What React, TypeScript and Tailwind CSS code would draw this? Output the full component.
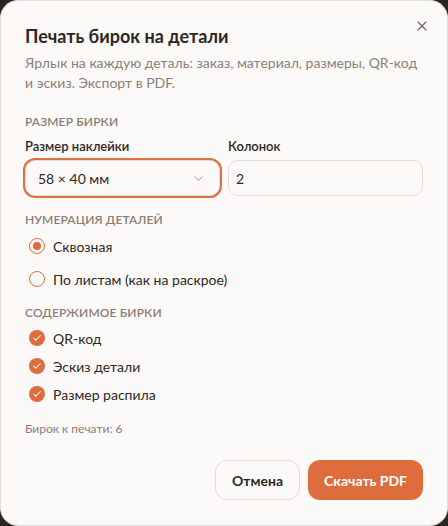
import React from "react";
import { ChevronDown, X, Check } from "lucide-react";

export default function App() {
  const font = { fontFamily: 'Lato, "Noto Sans", sans-serif' };
  return (
    <div className="h-[526px] w-[448px] bg-[#2a2522]" style={font}>
      <div className="relative flex h-full flex-col rounded-[18px] border border-[#e8dfd8] bg-[#fcfaf8] px-6 pt-[21px] text-[#2d2723]">
        <button className="absolute right-[17px] top-[17px] text-[#6d6560]">
          <X size={16} strokeWidth={1.6} />
        </button>
        <h1 className="text-[18px] font-bold leading-7">Печать бирок на детали</h1>
        <p className="mt-[3px] text-[14px] leading-5 text-[#8b8079]">
          Ярлык на каждую деталь: заказ, материал, размеры, QR-код и эскиз. Экспорт в PDF.
        </p>

        <div className="mt-[21px] text-[12px] font-semibold uppercase leading-4 tracking-[0.01em] text-[#8b7e75]">
          Размер бирки
        </div>
        <div className="mt-[6px] grid grid-cols-2 gap-2">
          <div className="flex flex-col">
            <label className="text-[13px] font-semibold leading-5">Размер наклейки</label>
            <div className="mt-[4px] flex h-9 items-center justify-between rounded-[10px] border border-[#e6ddd6] bg-[#fcfaf8] pl-3 pr-[13px] text-[14px] ring-2 ring-[#dd6f40]">
              <span>58 × 40 мм</span>
              <ChevronDown size={15} strokeWidth={1.5} className="text-[#9a908a]" />
            </div>
          </div>
          <div className="flex flex-col">
            <label className="text-[13px] font-semibold leading-5">Колонок</label>
            <div className="mt-[4px] flex h-9 items-center rounded-[10px] border border-[#e6ddd6] bg-[#fcfaf8] px-[7px] text-[14px]">
              2
            </div>
          </div>
        </div>

        <div className="mt-[16px] text-[12px] font-semibold uppercase leading-4 tracking-[0.01em] text-[#8b7e75]">
          Нумерация деталей
        </div>
        <div className="mt-[8px] flex flex-col gap-[13px] pl-1">
          <div className="flex h-5 items-center gap-2 text-[14px]">
            <span className="flex h-4 w-4 items-center justify-center rounded-full border-[1.5px] border-[#df6c3c]">
              <span className="h-2 w-2 rounded-full bg-[#df6c3c]" />
            </span>
            <span>Сквозная</span>
          </div>
          <div className="flex h-5 items-center gap-2 text-[14px]">
            <span className="h-4 w-4 rounded-full border-[1.5px] border-[#df6c3c]" />
            <span>По листам (как на раскрое)</span>
          </div>
        </div>

        <div className="mt-[16px] text-[12px] font-semibold uppercase leading-4 tracking-[0.01em] text-[#8b7e75]">
          Содержимое бирки
        </div>
        <div className="mt-[7px] flex flex-col gap-2 pl-1">
          {["QR-код", "Эскиз детали", "Размер распила"].map((t) => (
            <div key={t} className="flex h-5 items-center gap-2 text-[14px]">
              <span className="flex h-4 w-4 items-center justify-center rounded-full bg-[#df6c3c] text-white">
                <Check size={10} strokeWidth={2.5} />
              </span>
              <span>{t}</span>
            </div>
          ))}
        </div>

        <div className="mt-[17px] text-[12px] leading-4 text-[#8b8079]">Бирок к печати: 6</div>

        <div className="mt-[23px] flex justify-end gap-2">
          <button className="h-10 rounded-xl border border-[#e6ddd6] bg-[#fcfaf8] px-4 text-[14px] font-bold text-[#2d2723]">
            Отмена
          </button>
          <button className="h-10 rounded-xl bg-[#df6c3c] px-4 text-[14px] font-bold text-white">
            Скачать PDF
          </button>
        </div>
      </div>
    </div>
  );
}
